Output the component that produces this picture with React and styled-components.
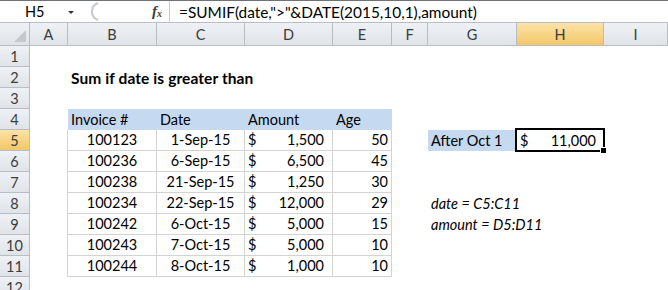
import React from "react";
import styled, { createGlobalStyle } from "styled-components";

const GlobalStyle = createGlobalStyle`
    html, body {
        margin: 0;
        padding: 0;
        background: #ffffff;
        overflow: hidden;
    }
    body {
        font-family: Lato, "Open Sans", sans-serif;
        font-size: 14.5px;
        color: #000;
    }
`;

const COLS = "30px 38px 89px 88px 88px 59px 36px 89px 87px 1fr";

const Window = styled.div`
    width: 668px;
    height: 290px;
    overflow: hidden;
    display: flex;
    flex-direction: column;
    border-top: 1px solid #6f7378;
`;

const FormulaBar = styled.div`
    display: flex;
    align-items: center;
    height: 21px;
    background: #fff;
    border-bottom: 1px solid #b9bec6;
`;

const NameBox = styled.div`
    width: 84px;
    flex: none;
    display: flex;
    align-items: center;
    padding-left: 25px;
    box-sizing: border-box;
    gap: 24px;
    font-size: 14.5px;
`;

const Arrow = styled.span`
    width: 0;
    height: 0;
    border-left: 3px solid transparent;
    border-right: 3px solid transparent;
    border-top: 3px solid #333;
    margin-top: 2px;
`;

const Grip = styled.svg`
    width: 18px;
    height: 21px;
    flex: none;
`;

const Fx = styled.div`
    width: 68px;
    flex: none;
    display: flex;
    justify-content: flex-end;
    align-items: center;
    height: 100%;
    box-sizing: border-box;
    padding-right: 7px;
    border-right: 1px solid #c7cbd1;
    font-family: "Liberation Serif", serif;
    font-style: italic;
    font-weight: bold;
    font-size: 15px;
    color: #3b3b3b;

    small {
        font-size: 10px;
        margin-top: 3px;
    }
`;

const Formula = styled.div`
    padding-left: 9px;
    font-size: 15.4px;
    white-space: nowrap;
`;

const Gap = styled.div`
    height: 2px;
    background: #e3e6ea;
`;

const Row = styled.div`
    display: grid;
    grid-template-columns: ${COLS};
    height: ${(p) => (p.$head ? "23px" : "21px")};
    flex: none;
`;

const HeadCell = styled.div`
    position: relative;
    box-sizing: border-box;
    display: flex;
    align-items: center;
    justify-content: center;
    border-right: 1px solid #b8bdc4;
    border-bottom: 1px solid #b8bdc4;
    background: ${(p) =>
        p.$active
            ? "linear-gradient(#fbe3a8, #f3c768)"
            : "linear-gradient(#eef1f5, #e0e4e9)"};
    color: #3c3c3c;
    font-size: 14.5px;
`;

const Corner = styled(HeadCell)`
    &::after {
        content: "";
        position: absolute;
        right: 3px;
        bottom: 3px;
        border-left: 12px solid transparent;
        border-bottom: 12px solid #c5c9cf;
    }
`;

const Cell = styled.div`
    position: relative;
    box-sizing: border-box;
    display: flex;
    align-items: center;
    justify-content: ${(p) => p.$align || "flex-start"};
    padding: 0 3px;
    line-height: 20px;
    white-space: nowrap;
    background: ${(p) => (p.$fill ? "#c5d9f1" : "transparent")};
    border-right: ${(p) => (p.$line ? "1px solid #d3d3d3" : "none")};
    border-bottom: ${(p) => (p.$lineB ? "1px solid #d3d3d3" : "none")};
    font-weight: ${(p) => (p.$bold ? "bold" : "normal")};
    font-style: ${(p) => (p.$italic ? "italic" : "normal")};
`;

const Title = styled(Cell)`
    font-size: 15.5px;
    letter-spacing: 0.1px;
`;

const Money = styled(Cell)`
    justify-content: space-between;
    padding-right: 8px;
`;

const Selection = styled.div`
    position: absolute;
    top: -2px;
    left: -2px;
    right: -1px;
    bottom: -1px;
    border: 2px solid #000;
    pointer-events: none;

    &::after {
        content: "";
        position: absolute;
        right: -4px;
        bottom: -4px;
        width: 5px;
        height: 5px;
        background: #000;
        border: 1px solid #fff;
    }
`;

const letters = ["A", "B", "C", "D", "E", "F", "G", "H", "I"];

const data = [
    ["100123", "1-Sep-15", "1,500", "50"],
    ["100236", "6-Sep-15", "6,500", "45"],
    ["100238", "21-Sep-15", "1,250", "30"],
    ["100234", "22-Sep-15", "12,000", "29"],
    ["100242", "6-Oct-15", "5,000", "15"],
    ["100243", "7-Oct-15", "5,000", "10"],
    ["100244", "8-Oct-15", "1,000", "10"],
];

function Blank({ n }) {
    return Array.from({ length: n }, (_, i) => <Cell key={i} />);
}

function SheetRow({ num, children }) {
    return (
        <Row>
            <HeadCell $active={num === 5}>{num}</HeadCell>
            {children}
        </Row>
    );
}

function App() {
    return (
        <Window>
            <GlobalStyle />
            <FormulaBar>
                <NameBox>
                    H5
                    <Arrow />
                </NameBox>
                <Grip viewBox="0 0 18 21">
                    <path
                        d="M14 2 A 9 9 0 0 0 14 19"
                        fill="none"
                        stroke="#c4c7cc"
                        strokeWidth="2"
                    />
                    <rect x="7" y="6" width="3" height="2" fill="#d6d8dc" />
                </Grip>
                <Fx>
                    f<small>x</small>
                </Fx>
                <Formula>=SUMIF(date,"&gt;"&amp;DATE(2015,10,1),amount)</Formula>
            </FormulaBar>
            <Gap />
            <Row $head>
                <Corner />
                {letters.map((l) => (
                    <HeadCell key={l} $active={l === "H"}>
                        {l}
                    </HeadCell>
                ))}
            </Row>

            <SheetRow num={1}>
                <Blank n={9} />
            </SheetRow>
            <SheetRow num={2}>
                <Cell />
                <Title $bold>Sum if date is greater than</Title>
                <Blank n={7} />
            </SheetRow>
            <SheetRow num={3}>
                <Blank n={9} />
            </SheetRow>
            <SheetRow num={4}>
                <Cell />
                <Cell $fill>Invoice #</Cell>
                <Cell $fill>Date</Cell>
                <Cell $fill>Amount</Cell>
                <Cell $fill>Age</Cell>
                <Blank n={4} />
            </SheetRow>
            {data.map((r, i) => (
                <SheetRow key={r[0]} num={5 + i}>
                    <Cell $line />
                    <Cell $line $lineB $align="center">
                        {r[0]}
                    </Cell>
                    <Cell $line $lineB $align="center">
                        {r[1]}
                    </Cell>
                    <Money $line $lineB>
                        <span>$</span>
                        <span>{r[2]}</span>
                    </Money>
                    <Cell $line $lineB $align="flex-end">
                        {r[3]}
                    </Cell>
                    <Cell />
                    {i === 0 && (
                        <>
                            <Cell $fill>After Oct 1</Cell>
                            <Money>
                                <span>$</span>
                                <span>11,000</span>
                                <Selection />
                            </Money>
                        </>
                    )}
                    {i === 3 && (
                        <>
                            <Cell $italic>date = C5:C11</Cell>
                            <Blank n={1} />
                        </>
                    )}
                    {i === 4 && (
                        <>
                            <Cell $italic>amount = D5:D11</Cell>
                            <Blank n={1} />
                        </>
                    )}
                    {![0, 3, 4].includes(i) && <Blank n={2} />}
                    <Cell />
                </SheetRow>
            ))}
            <SheetRow num={12}>
                <Blank n={9} />
            </SheetRow>
        </Window>
    );
}

export default App;
